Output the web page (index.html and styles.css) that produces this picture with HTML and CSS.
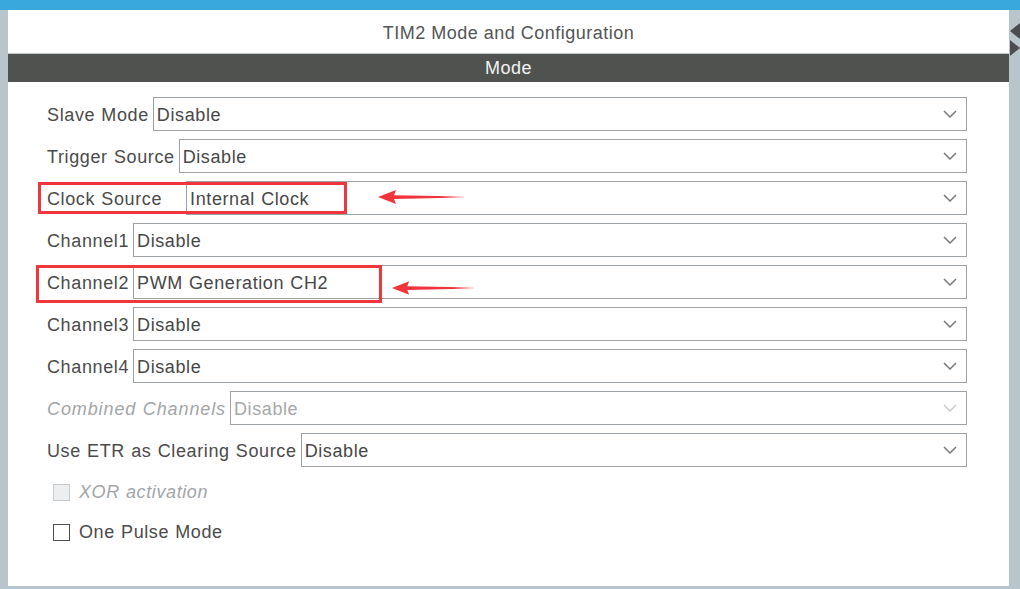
FILE: index.html
```html
<!DOCTYPE html>
<html>
<head>
<meta charset="utf-8">
<link rel="stylesheet" href="styles.css">
</head>
<body>
<div class="top-bar"></div>
<div class="window">
  <div class="panel">
    <div class="title">TIM2 Mode and Configuration</div>
    <div class="section-bar">Mode</div>
    <div class="form">
      <div class="row"><span class="label">Slave Mode</span><div class="select"><span>Disable</span><svg class="chev" viewBox="0 0 14 8"><path d="M1 1 L7 7 L13 1"/></svg></div></div>
      <div class="row"><span class="label">Trigger Source</span><div class="select"><span>Disable</span><svg class="chev" viewBox="0 0 14 8"><path d="M1 1 L7 7 L13 1"/></svg></div></div>
      <div class="row"><span class="label label-wide">Clock Source</span><div class="select"><span>Internal Clock</span><svg class="chev" viewBox="0 0 14 8"><path d="M1 1 L7 7 L13 1"/></svg></div></div>
      <div class="row"><span class="label">Channel1</span><div class="select"><span>Disable</span><svg class="chev" viewBox="0 0 14 8"><path d="M1 1 L7 7 L13 1"/></svg></div></div>
      <div class="row"><span class="label">Channel2</span><div class="select"><span>PWM Generation CH2</span><svg class="chev" viewBox="0 0 14 8"><path d="M1 1 L7 7 L13 1"/></svg></div></div>
      <div class="row"><span class="label">Channel3</span><div class="select"><span>Disable</span><svg class="chev" viewBox="0 0 14 8"><path d="M1 1 L7 7 L13 1"/></svg></div></div>
      <div class="row"><span class="label">Channel4</span><div class="select"><span>Disable</span><svg class="chev" viewBox="0 0 14 8"><path d="M1 1 L7 7 L13 1"/></svg></div></div>
      <div class="row"><span class="label label-disabled">Combined Channels</span><div class="select select-disabled"><span>Disable</span><svg class="chev" viewBox="0 0 14 8"><path d="M1 1 L7 7 L13 1"/></svg></div></div>
      <div class="row"><span class="label">Use ETR as Clearing Source</span><div class="select"><span>Disable</span><svg class="chev" viewBox="0 0 14 8"><path d="M1 1 L7 7 L13 1"/></svg></div></div>
      <div class="checks">
        <div class="check check-disabled"><span class="box"></span><span class="check-text">XOR activation</span></div>
        <div class="check"><span class="box"></span><span class="check-text">One Pulse Mode</span></div>
      </div>
    </div>
    <div class="mark mark-clock"></div>
    <div class="mark mark-ch2"></div>
    <svg class="arrow arrow-clock" viewBox="0 0 86 16"><defs><linearGradient id="fade" x1="0" x2="1" y1="0" y2="0"><stop offset="0" stop-color="#f1333b"/><stop offset="0.75" stop-color="#f1333b"/><stop offset="1" stop-color="#f1333b" stop-opacity="0.3"/></linearGradient></defs><polygon points="0,8 18,1 16,6.2 86,7.4 86,8.6 16,10 18,15" fill="url(#fade)"/></svg>
    <svg class="arrow arrow-ch2" viewBox="0 0 86 16"><polygon points="0,8 18,1 16,6.2 86,7.4 86,8.6 16,10 18,15" fill="url(#fade)"/></svg>
  </div>
  <div class="side">
    <svg class="side-icons" viewBox="0 0 11 40"><polygon points="1,13 11,5 11,21" fill="#4a4c4e"/><polygon points="1,22 11,30 1,38" fill="#4a4c4e"/></svg>
  </div>
</div>
</body>
</html>
```

FILE: styles.css
```css
* { box-sizing: border-box; }
html, body {
  margin: 0;
  padding: 0;
  width: 1020px;
  height: 589px;
  overflow: hidden;
  background: #b9c5cc;
  font-family: "Liberation Sans", Arial, Helvetica, sans-serif;
}
.top-bar {
  height: 10px;
  background: #39a8dc;
}
.window {
  display: flex;
  height: 579px;
  padding-left: 8px;
}
.panel {
  position: relative;
  flex: 1;
  height: 576px;
  background: #ffffff;
}
.title {
  height: 43px;
  display: flex;
  align-items: center;
  justify-content: center;
  font-size: 18px;
  letter-spacing: 0.5px;
  color: #545556;
  padding-top: 4px;
}
.section-bar {
  height: 29px;
  border-top: 1px solid #c4c7c9;
  background: #505250;
  color: #f2f2f2;
  font-size: 18px;
  letter-spacing: 0.45px;
  display: flex;
  align-items: center;
  justify-content: center;
  padding-top: 1px;
}
.form {
  padding: 15px 42px 0 39px;
  display: flex;
  flex-direction: column;
  gap: 8px;
}
.row {
  display: flex;
  align-items: center;
  height: 34px;
  gap: 4px;
}
.label {
  font-size: 18px;
  letter-spacing: 0.62px;
  word-spacing: 0.6px;
  color: #4b4b4b;
  white-space: nowrap;
  padding-top: 2px;
}
.label-wide { margin-right: 20px; }
.label-disabled {
  color: #a3a5a7;
  font-style: italic;
  letter-spacing: 0.9px;
}
.select {
  flex: 1;
  height: 34px;
  border: 1px solid #9da2a6;
  display: flex;
  align-items: center;
  justify-content: space-between;
  padding: 2px 9px 0 3px;
  font-size: 18px;
  letter-spacing: 0.6px;
  word-spacing: 0.6px;
  color: #474747;
}
.select-disabled { color: #a6a8aa; }
.chev {
  width: 14px;
  height: 8px;
  fill: none;
  stroke: #77797b;
  stroke-width: 1.5;
  margin-top: -2px;
}
.select-disabled .chev { stroke: #c9cbcd; }
.checks {
  margin-top: 5px;
  display: flex;
  flex-direction: column;
  gap: 16px;
  padding-left: 6px;
}
.check {
  display: flex;
  align-items: center;
  height: 24px;
  gap: 9px;
  font-size: 18px;
  letter-spacing: 0.6px;
  word-spacing: 0.6px;
  color: #4b4b4b;
}
.check-text { padding-top: 1px; }
.box {
  width: 17px;
  height: 17px;
  border: 1.5px solid #4e4e4e;
  background: #fff;
}
.check-disabled { color: #a3a5a7; font-style: italic; }
.check-disabled .box {
  border-color: #c6cacd;
  background: #eceef0;
}
.mark {
  position: absolute;
  border: 3px solid #f0353c;
}
.mark-clock { left: 30px; top: 172px; width: 309px; height: 32px; }
.mark-ch2 { left: 28px; top: 255px; width: 346px; height: 38px; }
.arrow {
  position: absolute;
  width: 86px;
  height: 16px;
}
.arrow-clock { left: 370px; top: 179px; }
.arrow-ch2 { left: 384px; top: 270px; width: 82px; }
.side {
  width: 11px;
}
.side-icons {
  display: block;
  width: 11px;
  height: 40px;
  margin-top: 8px;
}
```
